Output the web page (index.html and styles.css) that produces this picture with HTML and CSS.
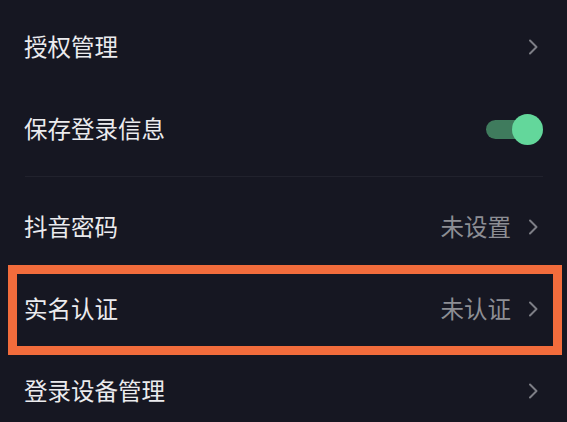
FILE: index.html
```html
<!DOCTYPE html>
<html lang="zh-CN">
<head>
<meta charset="utf-8">
<link rel="stylesheet" href="styles.css">
</head>
<body>
<div class="list">
  <div class="row">
    <span class="label">授权管理</span>
    <span class="right">
      <svg class="chev" viewBox="0 0 10 16" width="10" height="16"><path d="M2 1.5 L8.5 8 L2 14.5" /></svg>
    </span>
  </div>
  <div class="row">
    <span class="label">保存登录信息</span>
    <span class="right">
      <span class="toggle"><span class="track"></span><span class="knob"></span></span>
    </span>
  </div>
  <div class="divider"></div>
  <div class="row">
    <span class="label">抖音密码</span>
    <span class="right">
      <span class="value">未设置</span>
      <svg class="chev" viewBox="0 0 10 16" width="10" height="16"><path d="M2 1.5 L8.5 8 L2 14.5" /></svg>
    </span>
  </div>
  <div class="row highlighted">
    <span class="label">实名认证</span>
    <span class="right">
      <span class="value">未认证</span>
      <svg class="chev" viewBox="0 0 10 16" width="10" height="16"><path d="M2 1.5 L8.5 8 L2 14.5" /></svg>
    </span>
  </div>
  <div class="row">
    <span class="label">登录设备管理</span>
    <span class="right">
      <svg class="chev" viewBox="0 0 10 16" width="10" height="16"><path d="M2 1.5 L8.5 8 L2 14.5" /></svg>
    </span>
  </div>
</div>
</body>
</html>
```

FILE: styles.css
```css
html, body {
  margin: 0;
  padding: 0;
  background: #161722;
  overflow: hidden;
}
body {
  width: 567px;
  height: 422px;
  font-family: "Noto Sans CJK SC", "Noto Sans", sans-serif;
}
.list {
  padding-top: 6px;
}
.row {
  position: relative;
  height: 82px;
  display: flex;
  align-items: center;
  justify-content: space-between;
  padding: 0 29px 0 24px;
}
.label {
  color: #ebebee;
  font-size: 23.5px;
  line-height: 1;
}
.right {
  display: flex;
  align-items: center;
  gap: 17px;
}
.value {
  color: #8d8e94;
  font-size: 23.5px;
  line-height: 1;
}
.chev {
  display: block;
  fill: none;
  stroke: #7d7e86;
  stroke-width: 2;
  stroke-linecap: round;
  stroke-linejoin: round;
}
.divider {
  height: 1px;
  background: #21222d;
  margin: 6px 24px 9px 25px;
}
.toggle {
  position: relative;
  display: block;
  width: 57px;
  height: 31px;
  margin-right: -5px;
}
.track {
  position: absolute;
  left: 0;
  top: 6px;
  width: 48px;
  height: 19px;
  border-radius: 10px;
  background: #3f7b5d;
}
.knob {
  position: absolute;
  right: 0;
  top: 0;
  width: 31px;
  height: 31px;
  border-radius: 50%;
  background: #63d79b;
}
.highlighted::after {
  content: "";
  position: absolute;
  left: 8px;
  right: 5px;
  top: -3px;
  bottom: -5px;
  border: 9px solid #f26c3c;
  pointer-events: none;
}
```
